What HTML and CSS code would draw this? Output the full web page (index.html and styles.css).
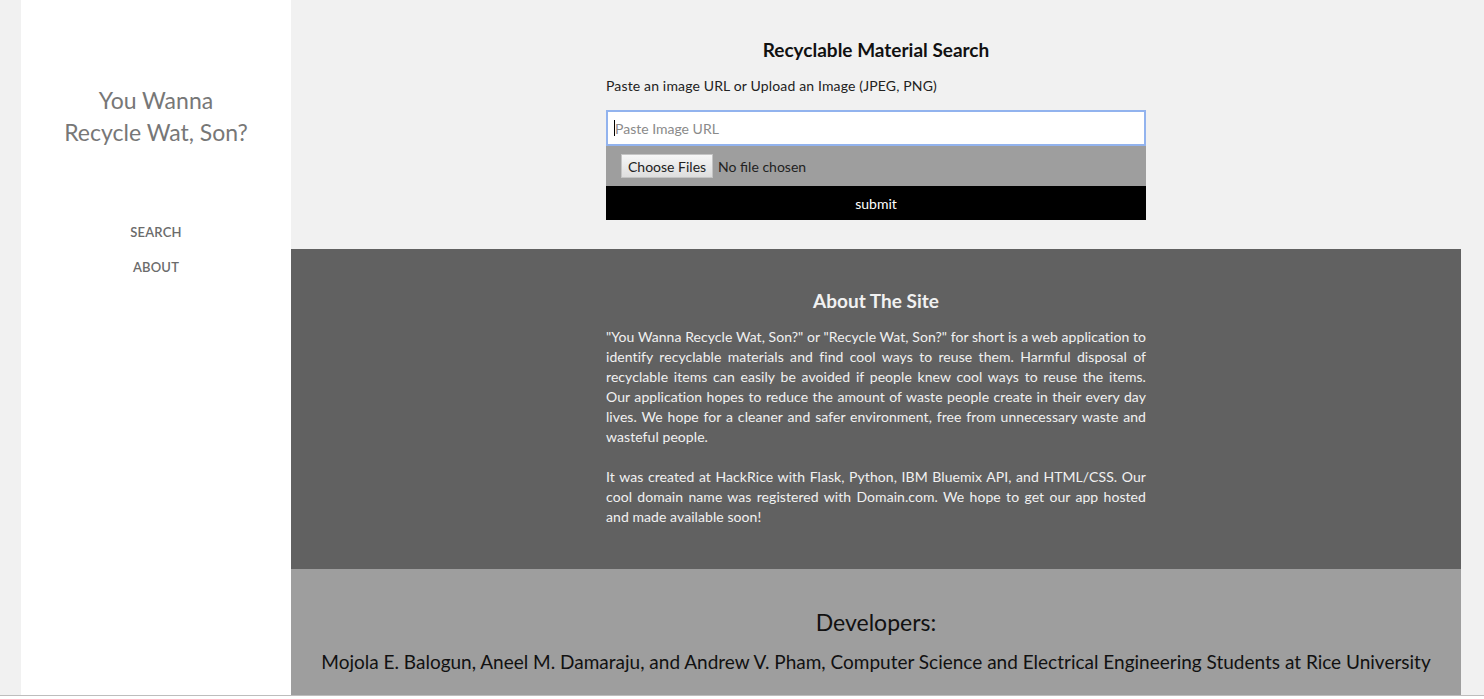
FILE: index.html
```html
<!DOCTYPE html>
<html>
<head>
<meta charset="utf-8">
<title>You Wanna Recycle Wat, Son?</title>
<link rel="stylesheet" href="styles.css">
</head>
<body>
<div class="frame">
  <aside class="sidebar">
    <h1 class="brand">You Wanna<br>Recycle Wat, Son?</h1>
    <nav class="nav">
      <a href="#search">Search</a>
      <a href="#about">About</a>
    </nav>
  </aside>
  <main class="main">
    <section class="search" id="search">
      <div class="col">
        <h2 class="search-title">Recyclable Material Search</h2>
        <p class="search-label">Paste an image URL or Upload an Image (JPEG, PNG)</p>
        <form class="search-form">
          <div class="url-box"><span class="caret"></span><span class="placeholder">Paste Image URL</span></div>
          <div class="file-row">
            <span class="file-btn">Choose Files</span>
            <span class="file-text">No file chosen</span>
          </div>
          <div class="submit">submit</div>
        </form>
      </div>
    </section>
    <section class="about" id="about">
      <div class="col">
        <h2 class="about-title">About The Site</h2>
        <p class="about-text">"You Wanna Recycle Wat, Son?" or "Recycle Wat, Son?" for short is a web application to identify recyclable materials and find cool ways to reuse them. Harmful disposal of recyclable items can easily be avoided if people knew cool ways to reuse the items. Our&nbsp;application hopes to reduce the amount of waste people create in their every day lives. We hope for a cleaner and safer environment, free from unnecessary waste and wasteful people.</p>
        <p class="about-text">It was created at HackRice with Flask, Python, IBM Bluemix API, and HTML/CSS. Our cool domain name was registered with Domain.com. We hope to get our app hosted and made available soon!</p>
      </div>
    </section>
    <section class="devs">
      <h2 class="devs-title">Developers:</h2>
      <p class="devs-names">Mojola E. Balogun, Aneel M. Damaraju, and Andrew V. Pham, Computer Science and Electrical Engineering Students at Rice University</p>
    </section>
  </main>
</div>
</body>
</html>
```
FILE: styles.css
```css
html {
  background: #ffffff;
}
body {
  margin: 0;
  font-family: "Lato", "Open Sans", sans-serif;
}
.frame {
  display: flex;
  height: 695px;
  padding: 0 23px 0 21px;
  background: #f1f1f1;
  border-bottom: 1px solid #bdbdbd;
  overflow: hidden;
}
.sidebar {
  width: 270px;
  flex: none;
  background: #ffffff;
  text-align: center;
}
.brand {
  margin: 84px 0 0;
  font-size: 23px;
  font-weight: 400;
  line-height: 32px;
  color: #777777;
}
.nav {
  display: flex;
  flex-direction: column;
  align-items: center;
  gap: 16px;
  margin-top: 75px;
}
.nav a {
  font-size: 13px;
  line-height: 19px;
  font-weight: 600;
  letter-spacing: 0.2px;
  color: #6b6b6b;
  text-transform: uppercase;
  text-decoration: none;
}
.main {
  width: 1170px;
  flex: none;
  display: flex;
  flex-direction: column;
}
.col {
  width: 540px;
  margin: 0 auto;
}
.search {
  height: 249px;
  box-sizing: border-box;
  padding-top: 37px;
}
.search-title {
  margin: 0;
  text-align: center;
  font-size: 19px;
  line-height: 26px;
  font-weight: 700;
  color: #111111;
}
.search-label {
  margin: 13px 0 0;
  font-size: 14px;
  line-height: 20px;
  letter-spacing: 0.15px;
  color: #222222;
}
.search-form {
  margin-top: 14px;
}
.url-box {
  height: 36px;
  box-sizing: border-box;
  background: #ffffff;
  border: 2px solid #92b3ee;
  display: flex;
  align-items: center;
  padding-left: 6px;
}
.caret {
  width: 1px;
  height: 16px;
  background: #000000;
}
.placeholder {
  font-size: 14px;
  color: #8a8a8a;
}
.file-row {
  height: 40px;
  background: #9e9e9e;
  display: flex;
  align-items: center;
  padding-left: 15px;
  font-size: 14px;
}
.file-btn {
  height: 24px;
  box-sizing: border-box;
  padding: 0 6px;
  display: flex;
  align-items: center;
  background: linear-gradient(#f6f6f6, #dedede);
  border: 1px solid #c4c4c4;
  color: #222222;
}
.file-text {
  margin-left: 5px;
  color: #222222;
}
.submit {
  height: 34px;
  background: #000000;
  color: #ffffff;
  font-size: 14px;
  display: flex;
  align-items: center;
  justify-content: center;
}
.about {
  height: 320px;
  box-sizing: border-box;
  background: #616161;
  padding-top: 39px;
}
.about-title {
  margin: 0;
  text-align: center;
  font-size: 19px;
  line-height: 26px;
  font-weight: 700;
  color: #f1f1f1;
}
.about-text {
  margin: 13px 0 0;
  font-size: 14px;
  line-height: 20px;
  letter-spacing: 0.07px;
  text-align: justify;
  color: #f1f1f1;
}
.about-text + .about-text {
  margin-top: 20px;
}
.devs {
  flex: 1;
  background: #9e9e9e;
  text-align: center;
  padding-top: 38px;
}
.devs-title {
  margin: 0;
  font-size: 23px;
  line-height: 30px;
  font-weight: 400;
  color: #111111;
}
.devs-names {
  margin: 13px 0 0;
  font-size: 19px;
  line-height: 24px;
  color: #111111;
}
```
